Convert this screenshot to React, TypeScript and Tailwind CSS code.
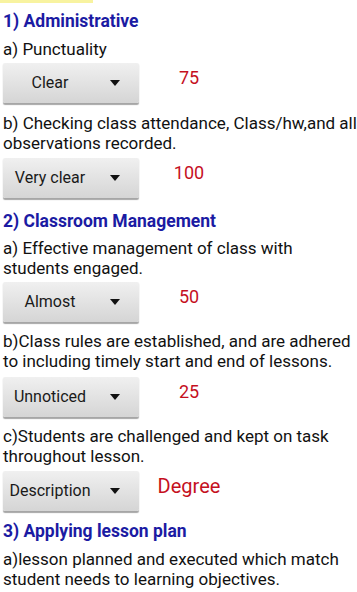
import React from "react";

function Caret() {
  return (
    <svg width="10" height="6" viewBox="0 0 10 6" className="block">
      <path d="M0 0 L10 0 L5 6 Z" fill="#111" />
    </svg>
  );
}

function Row({ label, value, big }: { label: string; value: string; big?: boolean }) {
  return (
    <div className="flex items-start">
      <div className="flex h-[40px] w-[136px] items-center rounded-[2px] bg-gradient-to-b from-[#f0f0f0] to-[#d5d5d5] shadow-[0_1.5px_1px_rgba(0,0,0,0.35)]">
        <span className="w-[94px] text-center text-[16px] leading-[20px] text-[#1a1a1a]">{label}</span>
        <span className="ml-[13px]"><Caret /></span>
      </div>
      <div
        className={
          big
            ? "mt-[3px] w-[100px] text-center text-[20px] leading-[24px] text-[#c5101e]"
            : "mt-[3px] w-[100px] text-center text-[18px] leading-[24px] text-[#c5101e]"
        }
      >
        {value}
      </div>
    </div>
  );
}

export default function App() {
  return (
    <div className="min-h-[592px] w-[357px] bg-white font-['Roboto',sans-serif] text-[#111]">
      <div className="h-[3px] w-[93px] bg-[#f8f3a0]" />
      <div className="flex flex-col pl-[3px]">
        <h2 className="mt-[8px] text-[17.5px] font-bold leading-[20px] text-[#1b1ba3]">1) Administrative</h2>
        <p className="mt-[8px] text-[17px] leading-[20px]">a) Punctuality</p>
        <div className="mt-[4px]"><Row label="Clear" value="75" /></div>
        <p className="mt-[10px] text-[17px] leading-[20px]">b) Checking class attendance, Class/hw,and all observations recorded.</p>
        <div className="mt-[5px]"><Row label="Very clear" value="100" /></div>
        <h2 className="mt-[13px] text-[17.5px] font-bold leading-[20px] text-[#1b1ba3]">2) Classroom Management</h2>
        <p className="mt-[7px] text-[17px] leading-[20px]">a) Effective management of class with students engaged.</p>
        <div className="mt-[4px]"><Row label="Almost" value="50" /></div>
        <p className="mt-[9px] text-[17px] leading-[20px]">b)Class rules are established, and are adhered to including timely start and end of lessons.</p>
        <div className="mt-[6px]"><Row label="Unnoticed" value="25" /></div>
        <p className="mt-[9px] text-[17px] leading-[20px]">c)Students are challenged and kept on task throughout lesson.</p>
        <div className="mt-[5px]"><Row label="Description" value="Degree" big /></div>
        <h2 className="mt-[10px] text-[17.5px] font-bold leading-[20px] text-[#1b1ba3]">3) Applying lesson plan</h2>
        <p className="mt-[8px] text-[17px] leading-[20px]">a)lesson planned and executed which match student needs to learning objectives.</p>
      </div>
    </div>
  );
}
